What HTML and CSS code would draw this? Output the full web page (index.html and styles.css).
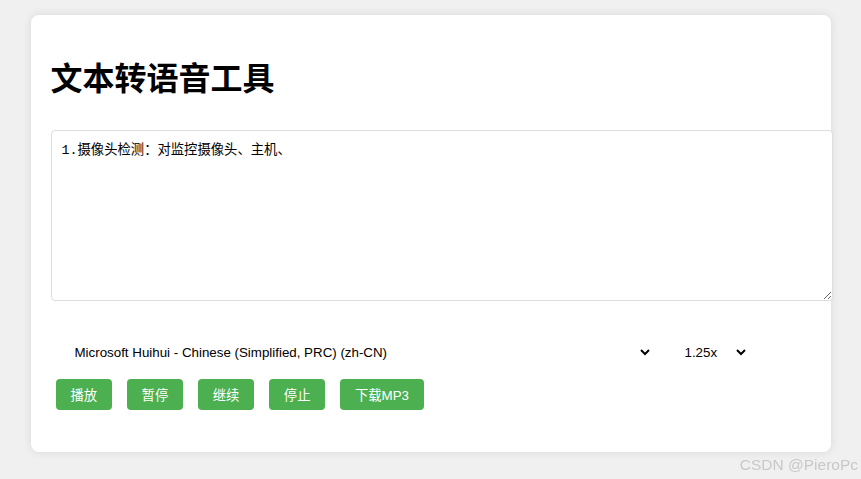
FILE: index.html
```html
<!DOCTYPE html>
<html lang="zh-CN">
<head>
  <meta charset="UTF-8">
  <meta name="viewport" content="width=device-width, initial-scale=1.0">
  <title>文本转语音工具</title>
  <link rel="stylesheet" href="styles.css">
</head>
<body>
  <div class="container">
    <h1>文本转语音工具</h1>
    <textarea id="text-input">1.摄像头检测：对监控摄像头、主机、</textarea>

    <div class="controls">
      <select id="voice-select" class="voice">
        <option>Microsoft Huihui - Chinese (Simplified, PRC) (zh-CN)</option>
      </select>
      <select id="rate-select" class="rate">
        <option>1.25x</option>
      </select>
    </div>

    <div class="buttons">
      <button id="play-btn">播放</button>
      <button id="pause-btn">暂停</button>
      <button id="resume-btn">继续</button>
      <button id="stop-btn">停止</button>
      <button id="download-btn">下载MP3</button>
    </div>
  </div>

  <div class="watermark">CSDN @PieroPc</div>
</body>
</html>
```

FILE: styles.css
```css
body {
  margin: 0;
  padding: 15px;
  background: #f0f0f0;
  font-family: "Liberation Sans", Arial, "Noto Sans CJK SC", sans-serif;
}

.container {
  max-width: 760px;
  margin: 0 auto;
  padding: 20px 20px 37px;
  background: white;
  border-radius: 8px;
  box-shadow: 0 0 10px rgba(0, 0, 0, 0.1);
}

h1 {
  font-size: 32px;
  font-family: "Liberation Sans", Arial, "Noto Sans CJK SC", sans-serif;
  margin: 21px 0 28px;
  line-height: 46px;
}

textarea {
  display: block;
  width: 760px;
  height: 149px;
  padding: 10px;
  border: 1px solid #ddd;
  border-radius: 4px;
  box-sizing: content-box;
  font-family: "Liberation Mono", "Noto Sans CJK SC", monospace;
  font-size: 13.333px;
  line-height: 19px;
  color: #000;
  resize: vertical;
}

.controls {
  display: flex;
  margin-top: 28px;
}

select {
  margin: 5px 10px 0;
  padding: 10px;
  border: none;
  background: transparent;
  font-family: "Liberation Sans", Arial, sans-serif;
  font-size: 13.333px;
  color: #000;
}

select.voice {
  width: 592px;
}

select.rate {
  width: 78px;
  margin-left: 8px;
}

.buttons {
  margin-top: 3px;
}

button {
  margin: 5px;
  padding: 0 15px;
  height: 31px;
  background: #4CAF50;
  color: white;
  border: none;
  border-radius: 4px;
  font-family: "Liberation Sans", Arial, "Noto Sans CJK SC", sans-serif;
  font-size: 13.333px;
  cursor: pointer;
}

button:hover {
  background: #45a049;
}

.watermark {
  position: fixed;
  right: 3px;
  bottom: 5px;
  color: #c8c8c8;
  font-size: 15.5px;
  font-family: "Liberation Sans", Arial, sans-serif;
}
```
